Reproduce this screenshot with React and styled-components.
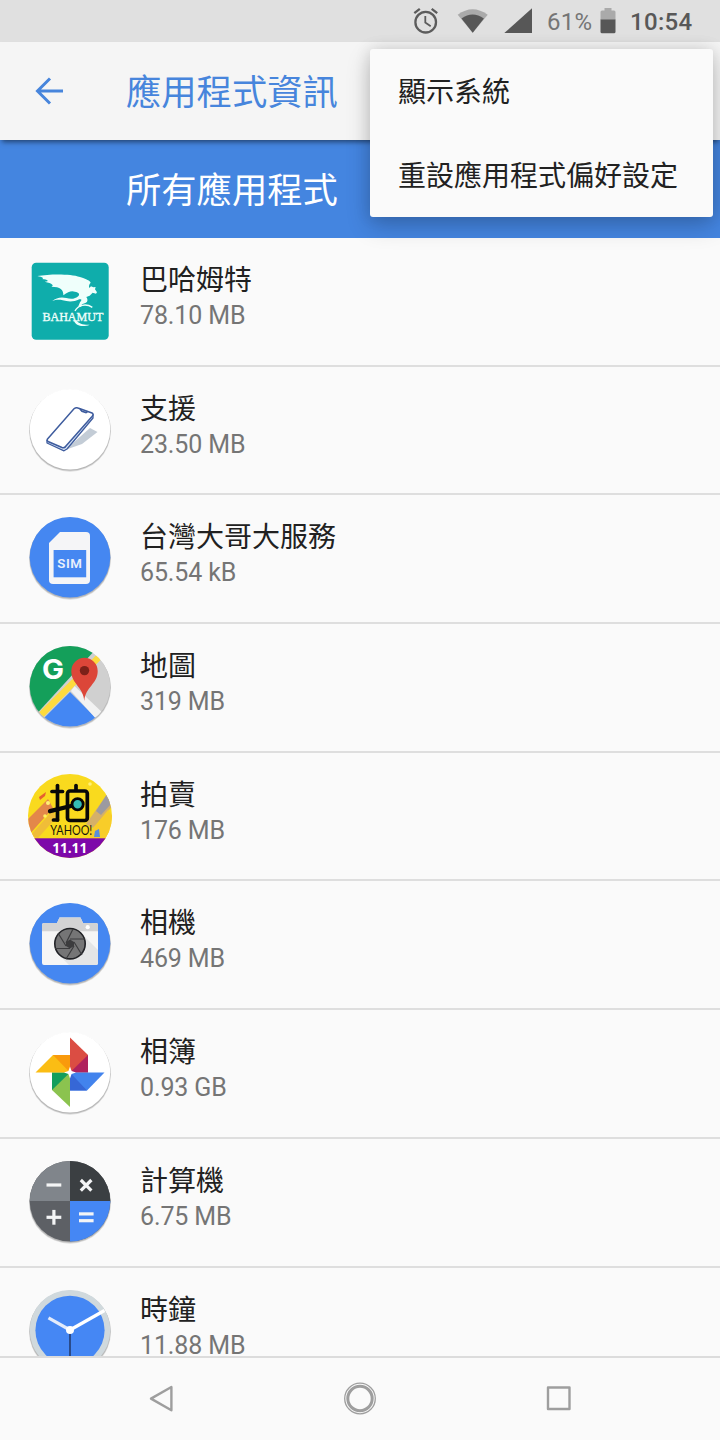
import React from 'react'
import styled, { createGlobalStyle } from 'styled-components'

const GlobalStyle = createGlobalStyle`
* {
  box-sizing: border-box;
}
body {
  margin: 0;
  background-color: #fafafa;
  font-family: Roboto, "Noto Sans CJK TC", sans-serif;
}
svg {
  display: block;
}
`

const Screen = styled.div`
position: relative;
width: 720px;
height: 1440px;
display: flex;
flex-direction: column;
overflow: hidden;
background-color: #fafafa;
`

const StatusBar = styled.div`
flex: none;
height: 42px;
padding-right: 28px;
display: flex;
align-items: center;
justify-content: flex-end;
background-color: #e0e0e0;
`

const Battery = styled.span`
width: 46px;
margin: 2px 7px 0 15px;
font-size: 24px;
line-height: 28px;
letter-spacing: 0.2px;
color: #757575;
`

const Time = styled.span`
width: 62px;
margin: 2px 0 0 14px;
font-size: 24px;
line-height: 28px;
font-weight: 500;
letter-spacing: 0.3px;
color: #585858;
`

const Header = styled.header`
position: relative;
flex: none;
height: 98px;
padding-left: 28px;
display: flex;
align-items: center;
background-color: #f5f5f5;
box-shadow: 0 4px 5px -2px rgba(0, 0, 0, 0.5);
`

const Title = styled.h1`
margin: 0 0 0 56px;
padding-top: 4px;
font-size: 35.3px;
line-height: 48px;
font-weight: 400;
color: #4785dc;
`

const Filter = styled.div`
flex: none;
height: 98px;
padding: 4px 0 0 126px;
display: flex;
align-items: center;
font-size: 35.3px;
line-height: 48px;
color: #fff;
background-color: #4485e0;
`

const Menu = styled.div`
position: absolute;
top: 49px;
left: 370px;
width: 343px;
height: 168px;
border-radius: 3px;
background-color: #fafafa;
box-shadow: 0 9px 24px rgba(0, 0, 0, 0.2), 0 0 16px rgba(0, 0, 0, 0.12);
`

const MenuItem = styled.div`
height: 84px;
padding: 0 0 2px 28px;
display: flex;
align-items: center;
font-size: 28px;
color: #212121;
`

const List = styled.div`
flex: 1;
min-height: 0;
overflow: hidden;
`

const Row = styled.div`
height: 128.7px;
padding: 13px 0 0 20px;
display: flex;
align-items: flex-start;
border-bottom: 2px solid #dedede;
`

const Info = styled.div`
padding: 10px 0 0 20px;
`

const Name = styled.div`
height: 40px;
font-size: 28px;
line-height: 40px;
color: #212121;
`

const Size = styled.div`
font-size: 25px;
line-height: 30px;
letter-spacing: -0.12px;
color: #757575;
`

const NavBar = styled.nav`
flex: none;
height: 84px;
display: flex;
align-items: center;
justify-content: space-between;
padding: 0 141px;
border-top: 2px solid #dcdcdc;
background-color: #fafafa;
`

const AppSvg = styled.svg`
flex: none;
width: 100px;
height: 100px;
`

const AppIcon = ({ children }) => <AppSvg viewBox="0 0 100 100">{children}</AppSvg>

// soft edge below the round icons
const Disc = ({ fill }) => (
  <>
    <circle cx="50" cy="50.7" r="41" fill="#000" opacity="0.12" />
    <circle cx="50" cy="50.1" r="40.7" fill="#000" opacity="0.16" />
    <circle cx="50" cy="49.3" r="40.3" fill={fill} />
  </>
)

const Bahamut = () => (
  <AppIcon>
    <rect x="11.7" y="11.7" width="77" height="77" rx="4.5" fill="#0fadab" />
    <g transform="translate(0 -1.3) scale(.3333)">
      <path
        d="M52 79 C90 73 150 72 180 82 C200 89 210 93 212 99 C207 104 206 110 208 115 L213 110 L220 113 L227 112 L225 119 L231 128 L228 132 L218 129 L209 138 L199 142 C204 149 204 157 196 160 L186 164 L183 172 L175 170 L180 158 C186 151 186 147 178 149 C160 158 143 156 128 152 C116 149 106 151 97 154 C108 144 124 141 139 145 C153 149 166 148 176 138 C180 132 174 127 165 126 C154 122 145 126 130 137 C131 121 121 111 94 111 C103 108 98 101 74 96 C90 96 84 89 66 88 C74 86 68 82 52 79 Z"
        fill="#effffb"
      />
      <path d="M217 173 C198 160 173 166 165 184" fill="none" stroke="#effffb" strokeWidth="4" />
      <path d="M162 213 C167 228 188 234 209 225 C190 226 176 221 170 213 Z" fill="#effffb" />
    </g>
    <text x="22.4" y="69.7" textLength="61" lengthAdjust="spacingAndGlyphs" fontFamily="Liberation Serif, serif" fontSize="13" fill="#effffb" stroke="#effffb" strokeWidth="0.35">BAHAMUT</text>
  </AppIcon>
)

const Support = () => (
  <AppIcon>
    <Disc fill="#fff" />
    <path d="M45 70 L70 48 L77.5 52 L62 64 Z" fill="#c3ccd6" />
    <path d="M27 60 L27 63 L44 70.8 L47 69 L73 38 L73 34" fill="#dce8f8" stroke="#3e5c9e" strokeWidth="1.3" strokeLinejoin="round" />
    <path d="M27.5 59 L54 28.8 Q56 27 58 28 L72 33 Q74 34 72 36.5 L46 66 Q44.5 68.5 42 67.5 L28 61.5 Q26.5 60.5 27.5 59 Z" fill="#fff" stroke="#3e5c9e" strokeWidth="1.5" />
    <path d="M60 29 L62 31.3 L66 32.5 L67.5 31.5" fill="none" stroke="#3e5c9e" strokeWidth="1.7" />
  </AppIcon>
)

const Sim = () => (
  <AppIcon>
    <Disc fill="#4587f1" />
    <path d="M40 24 H66 Q70 24 70 28 V72 Q70 76 66 76 H33 Q29 76 29 72 V35 Z" fill="#f5f5f7" />
    <rect x="33.6" y="42" width="32.6" height="27.3" fill="#4587f1" />
    <text x="37.2" y="60.4" fontSize="13.3" fontWeight="600" letterSpacing="0.6" fill="#e9f0fc">SIM</text>
  </AppIcon>
)

const Maps = () => (
  <AppIcon>
    <Disc fill="#d0d0d0" />
    <clipPath id="maps-clip"><circle cx="50" cy="49.3" r="40.3" /></clipPath>
    <g clipPath="url(#maps-clip)">
      <path d="M0 0 H87 L0 95 Z" fill="#149f5a" />
      <path d="M50 55 L100 105 H0 Z" fill="#4487f3" />
      <path d="M51 54 L54.5 49 L86 79 L78 84 Z" fill="#f2f2f2" />
      <path d="M16 83 L86 13" stroke="#fddb3e" strokeWidth="6.5" />
    </g>
    <text x="22" y="42.4" fontFamily="Inter, sans-serif" fontSize="27" fontWeight="700" textLength="22" lengthAdjust="spacingAndGlyphs" fill="#fff">G</text>
    <path d="M64.3 64 C63.5 50 51.3 47 51.3 34 A13.2 13.2 0 0 1 77.7 34 C77.7 47 65.2 50 64.3 64 Z" fill="#dc4639" />
    <circle cx="64.5" cy="33.6" r="4.7" fill="#7c2119" />
  </AppIcon>
)

const Auction = () => (
  <AppIcon>
    <clipPath id="auction-clip"><circle cx="50" cy="50" r="42" /></clipPath>
    <g clipPath="url(#auction-clip)">
      <rect width="100" height="100" fill="#f9da1e" />
      <path d="M5 56 L28 33 L33 42 L8 70 Z" fill="#e3874a" />
      <path d="M10 70 L33 44 L36 52 L18 72 Z" fill="#f0bd38" />
      <path d="M66 58 L88 27 L96 36 L73 62 Z" fill="#d5b069" />
      <path d="M76 45 L87 28 L93 36 L81 49 Z" fill="#9c9aa0" />
      <path d="M70 66 L88 44 L96 55 V72 H70 Z" fill="#f8cd29" />
      <path d="M19 31 L26 26 L25 30 L20 34 Z" fill="#e6602f" />
      <circle cx="28" cy="37" r="2" fill="#fff176" />
      <circle cx="25" cy="50" r="1.8" fill="#ffef63" />
      <circle cx="70" cy="18" r="1.8" fill="#fff176" />
      <path d="M74 71 L75 65 L79 63 L80 71 Z" fill="#5a8edb" />
      <rect y="72.3" width="100" height="30" fill="#7d08a9" />
    </g>
    <g fill="none" stroke="#080808" strokeWidth="3.7" strokeLinecap="round">
      <line x1="32" y1="25.5" x2="42.5" y2="25.5" />
      <line x1="37.5" y1="19.5" x2="37.5" y2="54" />
      <line x1="33.5" y1="54" x2="37.5" y2="54" />
      <rect x="47.5" y="25" width="19.8" height="29.5" rx="2.5" />
      <line x1="56" y1="19.5" x2="56" y2="24" />
      <line x1="30" y1="45.2" x2="51" y2="40" strokeWidth="4.3" />
    </g>
    <circle cx="57.6" cy="38.3" r="5.6" fill="#35bdb4" stroke="#080808" strokeWidth="2.8" />
    <text x="30.3" y="68.6" fontFamily="Lato, sans-serif" fontSize="12.5" textLength="42" lengthAdjust="spacingAndGlyphs" fill="#18150a">YAHOO!</text>
    <text x="32.2" y="87.3" fontFamily="Open Sans, sans-serif" fontSize="14.5" fontWeight="700" textLength="35" lengthAdjust="spacingAndGlyphs" fill="#fff">11.11</text>
  </AppIcon>
)

const Camera = () => (
  <AppIcon>
    <Disc fill="#4587f1" />
    <path d="M24 29 H37 L39.5 23.5 H60.5 L63 29 H76 Q78 29 78 31 V69 Q78 71 76 71 H24 Q22 71 22 69 V31 Q22 29 24 29 Z" fill="#f5f5f5" />
    <path d="M24 29 H37 L39.5 23.5 H60.5 L63 29 H76 Q78 29 78 31 V37.3 H22 V31 Q22 29 24 29 Z" fill="#d3d3d4" />
    <path d="M61 39 L78 56 V69 Q78 71 76 71 H49 L38 60 Z" fill="#e4e5e6" />
    <circle cx="67.7" cy="33.2" r="2.1" fill="#fff" />
    <circle cx="50" cy="49.7" r="15.2" fill="#757576" stroke="#212226" strokeWidth="1.6" />
    <path d="M50 45.5 L54 48 V52 L50 54.5 L46 52 V48 Z" fill="#3c3c3e" />
    <path d="M46 49 L53 35 M50 45 L65 45 M54 48 L62 61 M54 52 L46 65 M50 54.5 L35 54.5 M46 52 L38 39" stroke="#3c3c3e" strokeWidth="1.2" />
  </AppIcon>
)

const Photos = () => (
  <AppIcon>
    <Disc fill="#fff" />
    <path d="M50 14.5 L68 32 V49.5 H50 Z" fill="#db4d43" />
    <path d="M68 32 V49.5 H50 Z" fill="#b0225d" />
    <path d="M84.5 49.5 L67 67.5 H50 V49.5 Z" fill="#4283ed" />
    <path d="M50 49.5 L67 67.5 H50 Z" fill="#3667d6" />
    <path d="M50 84 L32 67 V49.5 H50 Z" fill="#8bc34f" />
    <path d="M50 49.5 L32 67 V49.5 Z" fill="#129e5c" />
    <path d="M15.5 49.5 L33 32 H50 V49.5 Z" fill="#fbbd14" />
    <path d="M33 32 H50 V49.5 Z" fill="#f99a0c" />
    <path d="M50 43.5 L51.6 47.9 L56 49.5 L51.6 51.1 L50 55.5 L48.4 51.1 L44 49.5 L48.4 47.9 Z" fill="#fff" />
  </AppIcon>
)

const Calculator = () => (
  <AppIcon>
    <Disc fill="#5d6065" />
    <clipPath id="calc-clip"><circle cx="50" cy="49.3" r="40.3" /></clipPath>
    <g clipPath="url(#calc-clip)">
      <rect width="50" height="49" fill="#80858b" />
      <rect x="50" width="50" height="49" fill="#3b3f42" />
      <rect x="50" y="49" width="50" height="50" fill="#4587f4" />
    </g>
    <g stroke="#f4f5f6" strokeWidth="3.2">
      <line x1="26.5" y1="33" x2="41.3" y2="33" />
      <line x1="60.8" y1="28" x2="71.4" y2="38.6" />
      <line x1="71.4" y1="28" x2="60.8" y2="38.6" />
      <line x1="26.5" y1="65.3" x2="41.3" y2="65.3" />
      <line x1="33.9" y1="57.9" x2="33.9" y2="72.7" />
      <line x1="59" y1="61.9" x2="73.6" y2="61.9" />
      <line x1="59" y1="68.7" x2="73.6" y2="68.7" />
    </g>
  </AppIcon>
)

const Clock = () => (
  <AppIcon>
    <Disc fill="#d0d9dd" />
    <circle cx="50" cy="49.3" r="34.6" fill="#4587f4" />
    <line x1="50" y1="49" x2="50" y2="84" stroke="#27457e" strokeWidth="1.8" />
    <line x1="50" y1="49" x2="28.5" y2="36.8" stroke="#e3ebfb" strokeWidth="3.2" />
    <line x1="50" y1="49" x2="84.5" y2="29.5" stroke="#fff" strokeWidth="3.2" />
    <circle cx="50" cy="49" r="4" fill="#fff" />
  </AppIcon>
)

// alarm, wifi and signal share one strip
const StatusIcons = () => (
  <svg width="122" height="42" viewBox="410 0 122 42">
    <g fill="none" stroke="#5c5c5c" strokeWidth="2.3">
      <circle cx="425.7" cy="22.2" r="10.3" />
      <path d="M425.3 16 V22.6 L430.7 26.2" strokeWidth="1.8" />
      <path d="M414.3 13.2 L419.8 8.8 M437.2 13.2 L431.7 8.8" />
    </g>
    <path d="M457.7 14.7 Q472.5 3.6 487.7 14.7 L472.7 32.7 Z" fill="#aaa" />
    <path d="M461.5 18.5 Q472.5 10.3 483.9 18.5 L472.7 32.7 Z" fill="#575757" />
    <path d="M532 8.3 V33 H504.3 Z" fill="#575757" />
  </svg>
)

const BatteryIcon = () => (
  <svg width="16" height="42" viewBox="600 0 16 42">
    <path d="M604.5 8 H611.5 V10.5 H614 Q615.5 10.5 615.5 12 V20 H600.5 V12 Q600.5 10.5 602 10.5 H604.5 Z" fill="#aaa" />
    <path d="M600.5 19.5 H615.5 V31.8 Q615.5 33.3 614 33.3 H602 Q600.5 33.3 600.5 31.8 Z" fill="#575757" />
  </svg>
)

const apps = [
  { name: '巴哈姆特', size: '78.10 MB', Icon: Bahamut },
  { name: '支援', size: '23.50 MB', Icon: Support },
  { name: '台灣大哥大服務', size: '65.54 kB', Icon: Sim },
  { name: '地圖', size: '319 MB', Icon: Maps },
  { name: '拍賣', size: '176 MB', Icon: Auction },
  { name: '相機', size: '469 MB', Icon: Camera },
  { name: '相簿', size: '0.93 GB', Icon: Photos },
  { name: '計算機', size: '6.75 MB', Icon: Calculator },
  { name: '時鐘', size: '11.88 MB', Icon: Clock },
]

const App = () => {
  return (
    <Screen lang="zh-Hant">
      <GlobalStyle />
      <StatusBar>
        <StatusIcons />
        <Battery>61%</Battery>
        <BatteryIcon />
        <Time>10:54</Time>
      </StatusBar>
      <Header>
        <svg width="42" height="42" viewBox="0 0 42 42" fill="none" stroke="#4785dc" strokeWidth="3">
          <path d="M35 21 H9 M22 8.5 L9.5 21 L22 33.5" />
        </svg>
        <Title>應用程式資訊</Title>
      </Header>
      <Filter>所有應用程式</Filter>
      <List>
        {apps.map(({ name, size, Icon }) => (
          <Row key={name}>
            <Icon />
            <Info>
              <Name>{name}</Name>
              <Size>{size}</Size>
            </Info>
          </Row>
        ))}
      </List>
      <NavBar>
        <svg width="40" height="40" viewBox="0 0 40 40" fill="none" stroke="#9e9e9e" strokeWidth="2.4" strokeLinejoin="round">
          <path d="M30.4 8 V31.3 L10 19.6 Z" />
        </svg>
        <svg width="40" height="40" viewBox="0 0 40 40" fill="none" stroke="#9e9e9e">
          <circle cx="20" cy="19.5" r="15.3" strokeWidth="1.3" />
          <circle cx="20" cy="19.5" r="12.2" strokeWidth="3" />
        </svg>
        <svg width="40" height="40" viewBox="0 0 40 40" fill="none" stroke="#9e9e9e" strokeWidth="2.4" strokeLinejoin="round">
          <rect x="9" y="8.5" width="21.5" height="21.5" />
        </svg>
      </NavBar>
      <Menu>
        <MenuItem>顯示系統</MenuItem>
        <MenuItem>重設應用程式偏好設定</MenuItem>
      </Menu>
    </Screen>
  )
}

export default App
